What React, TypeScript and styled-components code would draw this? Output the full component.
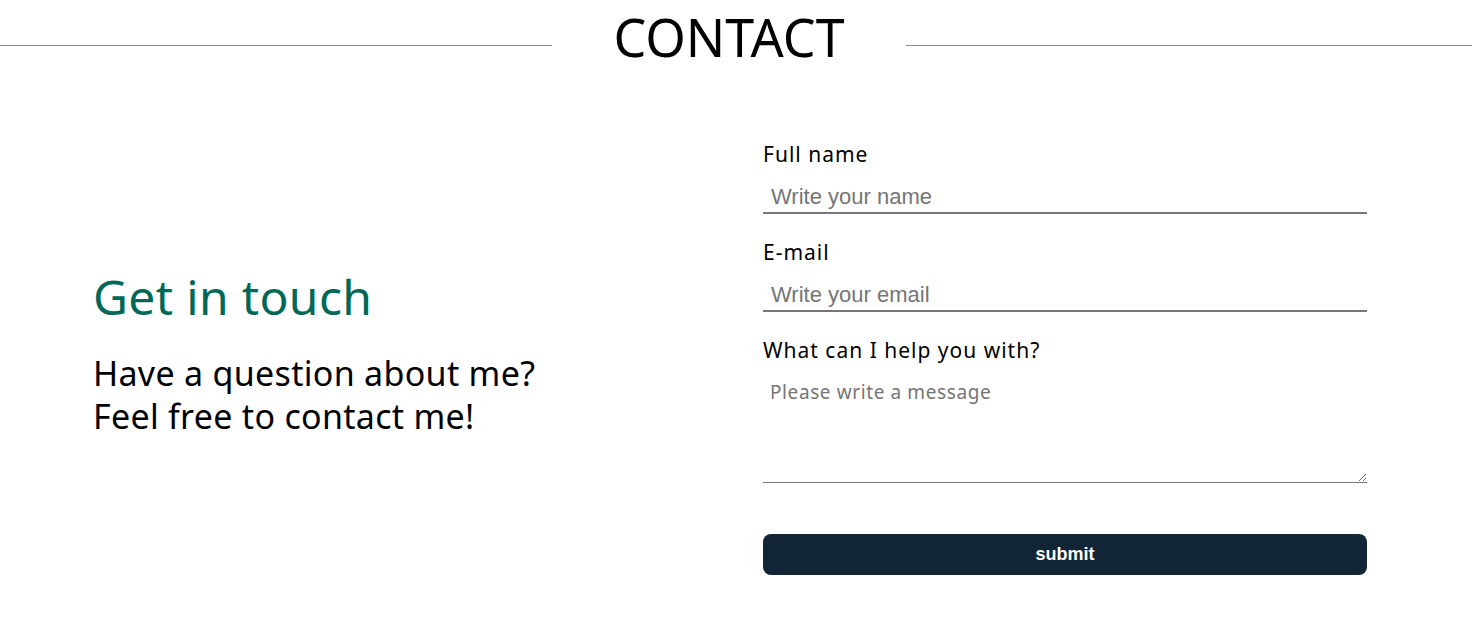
import React from "react";
import styled, { createGlobalStyle } from "styled-components";

const Global = createGlobalStyle`
  html, body { margin: 0; padding: 0; background: #fff; }
  body { font-family: "Noto Sans", "Liberation Sans", sans-serif; color: #000; }
  * { box-sizing: border-box; }
`;

const Page = styled.div`
  width: 1472px;
  height: 625px;
  overflow: hidden;
`;

const HeaderRow = styled.div`
  display: flex;
  align-items: flex-start;
  height: 71px;
`;

const Rule = styled.div<{ $w: number }>`
  height: 1px;
  background: #8a8a8a;
  flex: 0 0 ${(p) => p.$w}px;
  margin-top: 45px;
`;

const Title = styled.h1`
  margin: 0;
  flex: 1 1 auto;
  text-align: center;
  font-weight: 400;
  font-size: 52px;
  line-height: 73px;
  height: 71px;
`;

const Main = styled.div`
  display: grid;
  grid-template-columns: 670px 604px;
  align-items: center;
  padding: 70px 0 0 93px;
`;

const Intro = styled.div`
  display: flex;
  flex-direction: column;
  padding-bottom: 10px;
`;

const Heading = styled.h2`
  margin: 0;
  font-weight: 400;
  font-size: 48px;
  letter-spacing: 0.35px;
  line-height: 56px;
  color: #006857;
`;

const Lead = styled.p`
  margin: 27px 0 0 0;
  font-size: 34px;
  letter-spacing: 0.3px;
  line-height: 43px;
`;

const Form = styled.form`
  display: flex;
  flex-direction: column;
`;

const Label = styled.label`
  font-size: 21px;
  letter-spacing: 1px;
  line-height: 26px;
  margin-bottom: 6px;
`;

const Input = styled.input`
  font-family: "Liberation Sans", Arial, sans-serif;
  font-size: 22px;
  height: 41px;
  border: none;
  border-bottom: 2px solid #777;
  padding: 9px 8px 0;
  outline: none;
  margin-bottom: 25px;
  &::placeholder { color: #757575; }
`;

const TextArea = styled.textarea`
  font-family: "Noto Sans", "Liberation Sans", sans-serif;
  font-size: 19px;
  letter-spacing: 0.6px;
  height: 114px;
  border: none;
  border-bottom: 1px solid #777;
  padding: 10px 7px;
  outline: none;
  resize: vertical;
  &::placeholder { color: #757575; }
`;

const Submit = styled.button`
  margin-top: 51px;
  height: 41px;
  border: none;
  border-radius: 8px;
  background: #112536;
  color: #fff;
  font-family: "Liberation Sans", Arial, sans-serif;
  font-weight: 700;
  font-size: 18px;
  cursor: pointer;
`;

export default function App() {
  return (
    <Page>
      <Global />
      <HeaderRow>
        <Rule $w={552} />
        <Title>CONTACT</Title>
        <Rule $w={566} />
      </HeaderRow>
      <Main>
        <Intro>
          <Heading>Get in touch</Heading>
          <Lead>
            Have a question about me?
            <br />
            Feel free to contact me!
          </Lead>
        </Intro>
        <Form onSubmit={(e) => e.preventDefault()}>
          <Label htmlFor="name">Full name</Label>
          <Input id="name" placeholder="Write your name" />
          <Label htmlFor="email">E-mail</Label>
          <Input id="email" placeholder="Write your email" />
          <Label htmlFor="msg">What can I help you with?</Label>
          <TextArea id="msg" placeholder="Please write a message" />
          <Submit type="submit">submit</Submit>
        </Form>
      </Main>
    </Page>
  );
}
